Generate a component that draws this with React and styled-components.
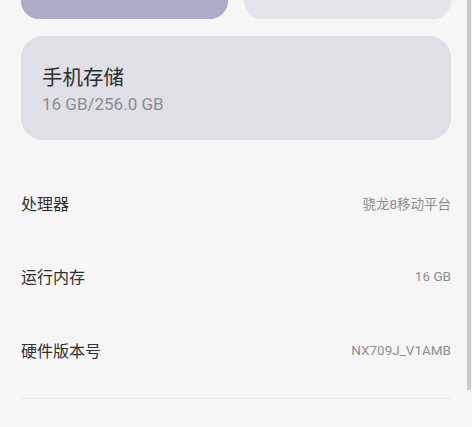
import React from 'react';
import styled, { createGlobalStyle } from 'styled-components';

const GlobalStyle = createGlobalStyle`
  html, body {
    margin: 0;
    padding: 0;
    background: #f6f6f7;
    font-family: Roboto, "Noto Sans CJK SC", sans-serif;
    overflow: hidden;
  }
`;

const Page = styled.div`
  position: relative;
  width: 472px;
  height: 427px;
  box-sizing: border-box;
  padding: 0 21px;
  background: #f6f6f7;
`;

// cards cut off by the top of the screen
const TopCards = styled.div`
  display: grid;
  grid-template-columns: 1fr 1fr;
  gap: 16px;
`;

const TopCard = styled.div`
  height: 19px;
  border-radius: 0 0 18px 18px;
  background: ${p => (p.$active ? '#adacc5' : '#e4e4eb')};
`;

const StorageCard = styled.div`
  margin-top: 17px;
  height: 104px;
  box-sizing: border-box;
  border-radius: 22px;
  background: #dfdfe6;
  padding: 28px 21px 0;
  display: flex;
  flex-direction: column;
`;

const StorageTitle = styled.div`
  font-size: 20.5px;
  line-height: 28px;
  color: #2e2e2e;
`;

const StorageSub = styled.div`
  font-size: 17px;
  line-height: 22px;
  color: #8c8c90;
  margin-top: 1px;
`;

const InfoList = styled.div`
  padding-top: 26px;
  display: flex;
  flex-direction: column;
`;

const InfoRow = styled.div`
  height: 73.5px;
  display: flex;
  align-items: center;
  justify-content: space-between;
`;

const Label = styled.span`
  font-size: 16px;
  color: #2f2f2f;
`;

const Value = styled.span`
  font-size: 13.5px;
  color: #8e8e8e;
`;

const Divider = styled.div`
  margin-top: 11px;
  height: 1px;
  background: #e6e6e8;
`;

const ScrollBar = styled.div`
  position: absolute;
  top: 0;
  right: 1px;
  width: 4px;
  height: 390px;
  background: #c9c9cb;
`;

const rows = [
  { label: '处理器', value: '骁龙8移动平台' },
  { label: '运行内存', value: '16 GB' },
  { label: '硬件版本号', value: 'NX709J_V1AMB' },
];

export default function App() {
  return (
    <>
      <GlobalStyle />
      <Page>
        <TopCards>
          <TopCard $active />
          <TopCard />
        </TopCards>
        <StorageCard>
          <StorageTitle>手机存储</StorageTitle>
          <StorageSub>16 GB/256.0 GB</StorageSub>
        </StorageCard>
        <InfoList>
          {rows.map(r => (
            <InfoRow key={r.label}>
              <Label>{r.label}</Label>
              <Value>{r.value}</Value>
            </InfoRow>
          ))}
        </InfoList>
        <Divider />
        <ScrollBar />
      </Page>
    </>
  );
}
